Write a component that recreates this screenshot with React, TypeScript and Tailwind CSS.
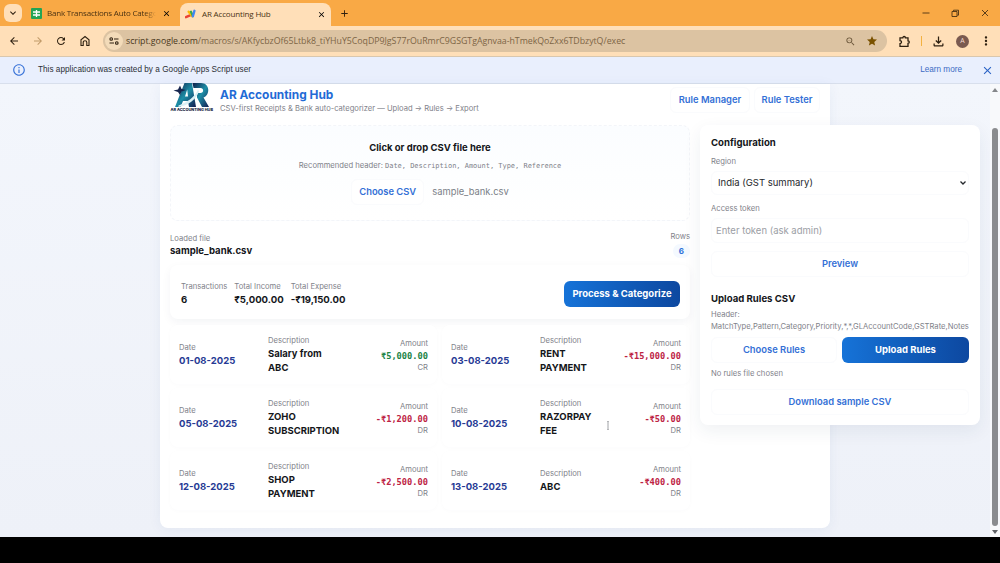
import React from 'react';
import {
  MdArrowBack,
  MdArrowForward,
  MdRefresh,
  MdOutlineZoomOut,
  MdStar,
  MdOutlineFileDownload,
  MdMoreVert,
  MdClose,
  MdAdd,
  MdExpandMore,
  MdInfoOutline,
} from 'react-icons/md';

type Transaction = {
  date: string;
  description: string;
  amount: string;
  type: 'CR' | 'DR';
};

const transactions: Transaction[] = [
  { date: '01-08-2025', description: 'Salary from ABC', amount: '₹5,000.00', type: 'CR' },
  { date: '03-08-2025', description: 'RENT PAYMENT', amount: '-₹15,000.00', type: 'DR' },
  { date: '05-08-2025', description: 'ZOHO SUBSCRIPTION', amount: '-₹1,200.00', type: 'DR' },
  { date: '10-08-2025', description: 'RAZORPAY FEE', amount: '-₹50.00', type: 'DR' },
  { date: '12-08-2025', description: 'SHOP PAYMENT', amount: '-₹2,500.00', type: 'DR' },
  { date: '13-08-2025', description: 'ABC', amount: '-₹400.00', type: 'DR' },
];

const TabStrip = () => (
  <div className="flex h-[26px] items-end bg-[#f9a945] font-['Open_Sans',sans-serif] text-[8px] text-[#4a3213]">
    <div className="mb-1 ml-1 flex h-[18px] w-[18px] items-center justify-center rounded-md bg-[#ffdfb8]">
      <MdExpandMore className="h-3 w-3 text-[#2e2010]" />
    </div>
    <div className="ml-[9px] flex h-[26px] w-[141px] items-center">
      <svg viewBox="0 0 11 11" className="h-[11px] w-[11px] shrink-0">
        <rect width="11" height="11" rx="1" fill="#23a455" />
        <path d="M2 4h7M2 7h7M5.5 2v7" stroke="#fff" strokeWidth="1.3" />
      </svg>
      <span className="ml-[5px] w-[109px] whitespace-nowrap tracking-[-0.025em] [mask-image:linear-gradient(to_right,black_90%,transparent)]">
        Bank Transactions Auto Catego
      </span>
      <MdClose className="ml-[6px] h-[9px] w-[9px] shrink-0 text-black" />
    </div>
    <div className="ml-2 flex h-[23px] w-[151px] items-center rounded-t-lg bg-[#ffdfb8] pb-px">
      <svg viewBox="0 0 12 10" className="ml-[5px] h-[10px] w-[11px] shrink-0">
        <path d="M1 8.500L8 5.500" stroke="#ea4335" strokeWidth="2.600" strokeLinecap="round" />
        <path d="M4 2.500L8 7.500" stroke="#fbbc04" strokeWidth="2.600" strokeLinecap="round" />
        <path d="M6.500 2.500L8.500 7" stroke="#34a853" strokeWidth="2.400" strokeLinecap="round" />
        <path d="M10.300 1.500L8.600 7.500" stroke="#4285f4" strokeWidth="2.600" strokeLinecap="round" />
      </svg>
      <span className="ml-[6px] w-[115px] whitespace-nowrap tracking-[-0.02em]">AR Accounting Hub</span>
      <MdClose className="h-[9px] w-[9px] text-black" />
    </div>
    <MdAdd className="mb-[7px] ml-[8px] h-[11px] w-[11px] text-[#2e2010]" />
    <svg viewBox="0 0 70 10" className="mb-2 ml-auto mr-[11px] h-[10px] w-[70px]" fill="none" stroke="#4a3213" strokeWidth="0.9">
      <path d="M3.500 5h7M33 3.500h5v5h-5zM34.500 3.200V2.200h5V7.200h-1.200M63 2l6 6M69 2l-6 6" />
    </svg>
  </div>
);

const Toolbar = () => (
  <div className="flex h-[31px] items-center border-b border-[#d9c7ae] bg-[#ffdfb8] text-[#2e2010]">
    <MdArrowBack className="ml-2 h-3 w-3" />
    <MdArrowForward className="ml-[12px] h-3 w-3 text-[#c29b69]" />
    <MdRefresh className="ml-[11px] h-3 w-3" />
    <svg viewBox="0 0 12 12" className="ml-[12px] h-3 w-3" fill="none" stroke="currentColor" strokeWidth="1.100">
      <path d="M2 10.500V4.800L6 1.500l4 3.300v5.700H7.800V7.500a1.800 1.800 0 0 0-3.600 0v3z" />
    </svg>
    <div className="ml-[12px] flex h-[22px] w-[784px] items-center rounded-full bg-[#dcc3a2]">
      <div className="ml-0.5 flex h-[18px] w-[18px] items-center justify-center rounded-full bg-[#f3dbb9]">
        <svg viewBox="0 0 10 8" className="h-2 w-2.5" fill="none" stroke="currentColor" strokeWidth="1.100">
          <circle cx="2.200" cy="2" r="1.300" />
          <path d="M5 2h4.500M0.500 6H5" />
          <circle cx="7.800" cy="6" r="1.300" />
        </svg>
      </div>
      <span className="ml-[3px] flex-1 whitespace-nowrap pt-px font-['Open_Sans',sans-serif] text-[8.8px] tracking-[-0.003em] text-[#7c6546]">
        <span className="text-[#4a3820]">script.google.com</span>
        /macros/s/AKfycbzOf65Ltbk8_tiYHuY5CoqDP9JgS77rOuRmrC9GSGTgAgnvaa-hTmekQoZxx6TDbzytQ/exec
      </span>
      <MdOutlineZoomOut className="h-[11px] w-[11px] text-[#6b563a]" />
      <MdStar className="ml-[10px] mr-[9px] h-3 w-3 text-[#7a5200]" />
    </div>
    <svg viewBox="0 0 13 13" className="ml-[11px] h-[13px] w-[13px]" fill="none" stroke="currentColor" strokeWidth="1.300">
      <path d="M2 2.800h2.800a1.300 1.300 0 0 1 2.600 0H10v3a1.300 1.300 0 0 1 0 2.600v3H2V8.600a1.500 1.500 0 0 0 0-3z" />
    </svg>
    <div className="ml-[10px] h-[10px] w-px bg-[#f3b13f]" />
    <MdOutlineFileDownload className="ml-[9px] h-[15px] w-[15px]" />
    <div className="ml-[10px] flex h-[13px] w-[13px] items-center justify-center rounded-full bg-[#7a5a50] font-['Open_Sans',sans-serif] text-[7px] text-[#f3d9cf]">
      A
    </div>
    <MdMoreVert className="ml-[10px] h-[14px] w-[14px]" />
  </div>
);

const ScriptNotice = () => (
  <div className="flex h-[27px] items-center border-b border-[#d8dfec] bg-[#e9effd] font-['Liberation_Sans',sans-serif] text-[8.2px] text-[#2b2f36]">
    <MdInfoOutline className="ml-3 h-[14px] w-[14px] text-[#3973d8]" />
    <span className="ml-3 tracking-[0.003em]">This application was created by a Google Apps Script user</span>
    <span className="ml-auto text-[#3c6cc4]">Learn more</span>
    <MdClose className="ml-[19px] mr-[6px] h-[13px] w-[13px] text-[#2b63c6]" />
  </div>
);

const Logo = () => (
  <svg viewBox="0 0 44 30" className="h-[30px] w-[44px] shrink-0">
    <defs>
      <linearGradient id="ar" x1="0" y1="0" x2="1" y2="1">
        <stop offset="0" stopColor="#101c48" />
        <stop offset="0.500" stopColor="#1c8ea6" />
        <stop offset="1" stopColor="#141c50" />
      </linearGradient>
    </defs>
    <path d="M5 24L14.500 0H22l4 24h-7l-1-6h-5l-2.500 6zM15 13.500h3l-.8-7z" fill="url(#ar)" />
    <path d="M22.500 0H31c9 0 9.500 12 2.500 14.500L39 24h-7l-5-9.500V10h3.500c3.500 0 3.500-5 0-5H23.500z" fill="url(#ar)" />
    <path d="M3.500 7.500l4.500-1 2-4 1.500 3.500 4.500 1-4.500 1.500-1.500 3.500-2-3z" fill="#17264e" />
    <path d="M8.500 22.500C17 19.500 25 14 28 6.500l1 2C26 17 17.500 22.500 8.500 24z" fill="#d9f0f5" />
    <text x="0.500" y="28.200" fontSize="3.800" fontWeight="800" textLength="42.500" lengthAdjust="spacingAndGlyphs" fill="#14183c">
      AR ACCOUNTING HUB
    </text>
  </svg>
);

const Muted = ({ children }: { children: React.ReactNode }) => (
  <div className="-mb-px pt-px text-[7.65px] leading-[10px] text-[#7f828a]">{children}</div>
);

const OutlineButton = ({ children, className = '' }: { children: React.ReactNode; className?: string }) => (
  <button className={`h-[26px] rounded-md border border-[#fafbfd] bg-white text-[9.4px] font-semibold text-[#3470d6] ${className}`}>
    {children}
  </button>
);

const PrimaryButton = ({ children, className = '' }: { children: React.ReactNode; className?: string }) => (
  <button className={`h-[26px] rounded-md bg-linear-to-r from-[#1673d8] to-[#0d48a0] text-[9.5px] font-bold text-white ${className}`}>
    {children}
  </button>
);

const Header = () => (
  <header className="flex h-[41px]">
    <div className="-mt-px h-[33px]">
      <Logo />
    </div>
    <div className="ml-1.5 pt-[3px]">
      <h1 className="text-[11.9px] font-bold leading-[15px] text-[#1f6bd6]">AR Accounting Hub</h1>
      <p className="pt-px text-[7.6px] leading-[12px] text-[#7f828a]">CSV-first Receipts &amp; Bank auto-categorizer — Upload → Rules → Export</p>
    </div>
    <div className="ml-auto mr-[10px] flex gap-1 pt-[3px]">
      <OutlineButton className="w-[80px]">Rule Manager</OutlineButton>
      <OutlineButton className="w-[66px]">Rule Tester</OutlineButton>
    </div>
  </header>
);

const DropZone = () => (
  <div className="flex h-[96px] flex-col items-center rounded-lg border border-dashed border-[#f3f5f9] bg-linear-to-b from-[#fbfdff] to-white pt-4">
    <div className="text-[9.5px] font-bold leading-[12px] text-[#14161a]">Click or drop CSV file here</div>
    <div className="mt-[7px] text-[7.65px] leading-[10px] text-[#7f828a]">
      Recommended header:{' '}
      <code className="font-['DejaVu_Sans_Mono',monospace] text-[6.98px]">Date, Description, Amount, Type, Reference</code>
    </div>
    <div className="mt-2 flex items-center">
      <OutlineButton className="w-[73px]">Choose CSV</OutlineButton>
      <span className="ml-2 text-[9.4px] text-[#7b7f87]">sample_bank.csv</span>
    </div>
  </div>
);

const Stat = ({ label, value }: { label: string; value: string }) => (
  <div>
    <Muted>{label}</Muted>
    <div className="mt-[2px] text-[9.6px] font-bold leading-[13px] text-[#14161a]">{value}</div>
  </div>
);

const TransactionCard = ({ date, description, amount, type }: Transaction) => (
  <div className="flex h-[59px] items-center rounded-lg bg-white pl-[9px] pr-[9px] shadow-[0_1px_4px_rgba(20,40,80,0.02)]">
    <div className="w-[89px] shrink-0">
      <Muted>Date</Muted>
      <div className="mt-[2px] text-[9.5px] font-bold leading-[14px] text-[#263a94]">{date}</div>
    </div>
    <div className="w-[60px] shrink-0">
      <Muted>Description</Muted>
      <div className="mt-[2px] text-[9.5px] font-bold leading-[14px] text-[#14161a]">{description}</div>
    </div>
    <div className="ml-auto text-right">
      <Muted>Amount</Muted>
      <div
        className={`mt-[2px] whitespace-nowrap font-['DejaVu_Sans_Mono',monospace] text-[8.7px] font-bold leading-[12px] ${
          type === 'CR' ? 'text-[#208345]' : 'text-[#bd2344]'
        }`}
      >
        {amount}
      </div>
      <Muted>{type}</Muted>
    </div>
  </div>
);

const Configuration = () => (
  <aside className="h-[300px] w-[280px] shrink-0 rounded-lg bg-white px-[11px] pt-[11px] shadow-[0_6px_18px_rgba(30,50,90,0.07)]">
    <h2 className="text-[9.6px] font-bold leading-[13px] text-[#14161a]">Configuration</h2>
    <div className="mt-[7px]">
      <Muted>Region</Muted>
    </div>
    <div className="mt-[5px] flex h-6 items-center rounded-md border border-[#fafbfd] pl-[6px] text-[9.5px] text-[#25282d]">
      India (GST summary)
      <svg viewBox="0 0 8 6" className="ml-auto mr-px h-[6px] w-[8px]" fill="none" stroke="#25282d" strokeWidth="1.3">
        <path d="M1.500 1.500L4 4l2.500-2.500" />
      </svg>
    </div>
    <div className="mt-[8px]">
      <Muted>Access token</Muted>
    </div>
    <input
      placeholder="Enter token (ask admin)"
      className="mt-[5px] block h-[25px] w-full rounded-md border border-[#fafbfd] px-1 text-[9.5px] placeholder:text-[#9b9ea5]"
    />
    <OutlineButton className="mt-[8px] block w-full">Preview</OutlineButton>

    <h2 className="mt-[15px] text-[9.6px] font-bold leading-[13px] text-[#14161a]">Upload Rules CSV</h2>
    <div className="-mb-px mt-[4px] w-full whitespace-nowrap text-[7.62px] leading-[12px] text-[#7f828a]">
      Header:
      <br />
      MatchType,Pattern,Category,Priority,*,*,GLAccountCode,GSTRate,Notes
    </div>
    <div className="mt-[5px] flex gap-[5px]">
      <OutlineButton className="w-[126px]">Choose Rules</OutlineButton>
      <PrimaryButton className="w-[127px]">Upload Rules</PrimaryButton>
    </div>
    <div className="mt-[5px]">
      <Muted>No rules file chosen</Muted>
    </div>
    <OutlineButton className="mt-[11px] block w-full">Download sample CSV</OutlineButton>
  </aside>
);

const App = () => {
  return (
    <div className="relative h-[563px] w-[1000px] overflow-hidden bg-black font-['Inter',sans-serif]">
      <TabStrip />
      <Toolbar />
      <ScriptNotice />

      <div className="flex h-[453px] bg-linear-to-b from-[#f3f6fc] to-[#eef1f8]">
        <main className="ml-[160px] h-[444px] w-[670px] shrink-0 rounded-b-lg bg-white pl-[10px] shadow-[0_2px_14px_rgba(40,70,130,0.06)]">
          <Header />
          <div className="flex gap-[10px]">
            <section className="w-[520px] shrink-0">
              <DropZone />
              <div className="mt-[10px] flex h-[34px] justify-between">
                <div className="pt-[2px]">
                  <Muted>Loaded file</Muted>
                  <div className="mt-[2px] text-[9.6px] font-bold leading-[12px] text-[#14161a]">sample_bank.csv</div>
                </div>
                <div className="flex flex-col items-end">
                  <Muted>Rows</Muted>
                  <span className="mt-[3px] rounded-full bg-[#f4f9ff] px-[6px] text-[8px] font-bold leading-[14px] text-[#2a70d8]">6</span>
                </div>
              </div>

              <div className="flex h-[54px] items-center rounded-lg bg-white pl-[11px] pr-[10px] pt-[4px] shadow-[0_3px_10px_rgba(20,40,80,0.05)]">
                <div className="-mt-0.5 flex items-end gap-[7px]">
                  <Stat label="Transactions" value="6" />
                  <Stat label="Total Income" value="₹5,000.00" />
                  <Stat label="Total Expense" value="-₹19,150.00" />
                </div>
                <PrimaryButton className="ml-auto w-[116px]">Process &amp; Categorize</PrimaryButton>
              </div>

              <div className="mt-[6px] grid grid-cols-[267px_248px] gap-x-[5px] gap-y-1">
                {transactions.map((item) => (
                  <TransactionCard key={item.date} {...item} />
                ))}
              </div>
            </section>
            <Configuration />
          </div>
        </main>

        <div className="ml-auto flex h-full w-[10px] flex-col items-center bg-[#f8f9fb]">
          <svg viewBox="0 0 6 4" className="mt-1 h-1 w-1.5">
            <path d="M0 4l3-4 3 4z" fill="#85878a" />
          </svg>
          <div className="mt-9 h-[398px] w-[6px] rounded-full bg-[#8b8c8e]" />
          <svg viewBox="0 0 6 4" className="mb-[3px] mt-auto h-1 w-1.5">
            <path d="M0 0l3 4 3-4z" fill="#606266" />
          </svg>
        </div>
      </div>

      {/* text cursor */}
      <svg viewBox="0 0 4 9" className="absolute left-[606px] top-[421px] h-[9px] w-1" fill="none" stroke="#8b8e93" strokeWidth="0.8">
        <path d="M1.300 .5h1.400M2 .5v8M1.300 8.500h1.400" />
      </svg>
    </div>
  );
};

export default App;
